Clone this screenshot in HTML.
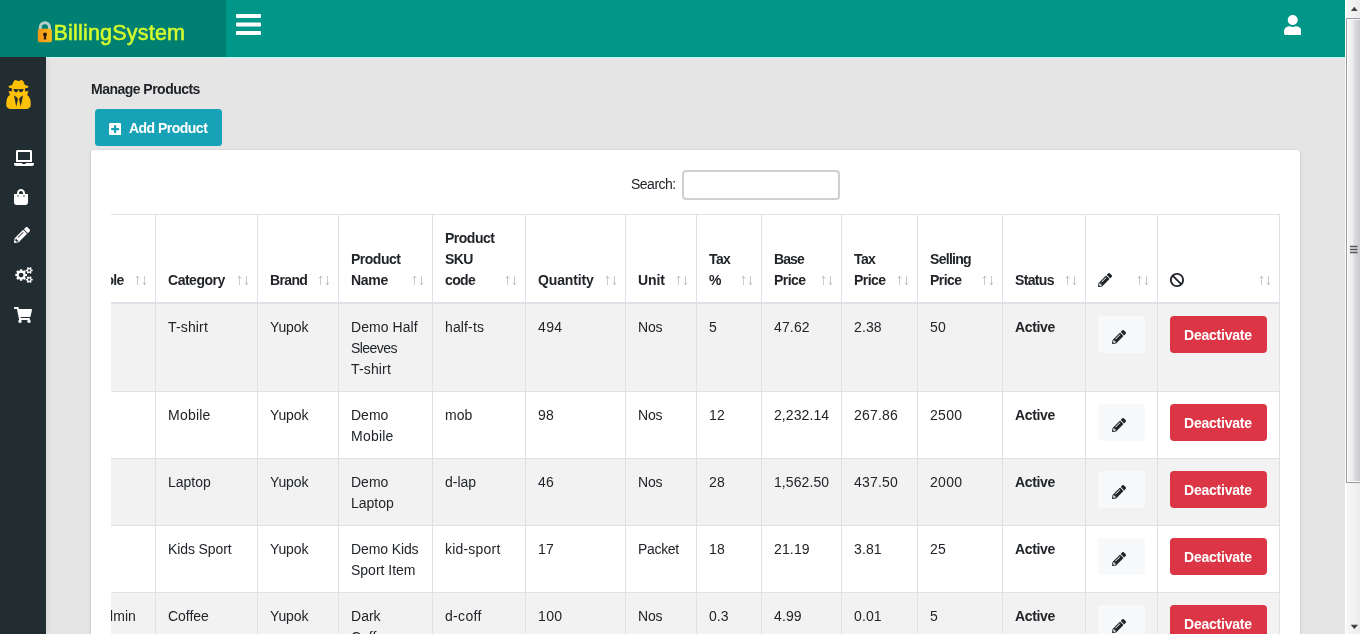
<!DOCTYPE html>
<html lang="en"><head><meta charset="utf-8"><title>Manage Products</title>
<style>
*{box-sizing:border-box}
html,body{margin:0;padding:0}
body{width:1360px;height:634px;overflow:hidden;background:#e5e5e5;font-family:"Liberation Sans", sans-serif;font-size:14px;line-height:21px;color:#212529;position:relative;will-change:transform}
.ic{display:block}
.abs{position:absolute}
#hdr{left:0;top:0;width:1345px;height:57px;background:#009688}
#logo{left:0;top:0;width:226px;height:57px;background:#008073}
#logotxt{left:53.500px;top:18px;height:30px;line-height:30px;font-size:21.500px;color:#d4fb2e;white-space:nowrap;-webkit-text-stroke:.5px #d4fb2e;letter-spacing:.2px}
#logotxt .t{top:0}
#hline{left:46px;top:57px;width:1299px;height:4px;background:linear-gradient(#c6f9f0 0,#c6f9f0 1px,#e2ecea 1px,#e2ecea 2px,#ebe3e5 2px,#ebe3e5 3px,#e8e4e5 3px)}
#side{left:0;top:57px;width:46px;height:577px;background:#222d32;box-shadow:1px 0 7px rgba(0,0,0,.07)}
#title{left:91px;top:77.500px;font-weight:700;white-space:nowrap}
#add{left:95px;top:109px;width:127px;height:37px;background:#17a2b8;border-radius:3.500px;color:#fff;font-weight:700;white-space:nowrap}
#add .t{position:absolute;left:34px;top:8.500px}
#card{left:91px;top:150px;width:1209px;height:500px;background:#fff;border-radius:3px;box-shadow:0 0 1px rgba(0,0,0,.125),0 1px 3px rgba(0,0,0,.2)}
#slabel{left:631px;top:173px;white-space:nowrap}
#sinput{left:682px;top:170px;width:158px;height:30px;border:2px solid #cfcfd3;border-radius:4px;background:#fff}
#twrap{left:111px;top:214px;width:1169px;height:420px;overflow:hidden}
table{border-collapse:separate;border-spacing:0;table-layout:fixed;width:1196px;margin-left:-27px;border-top:1px solid #dee2e6}
th,td{padding:12px 0 12px 12px;border-right:1px solid #dee2e6;text-align:left;vertical-align:top;white-space:nowrap;position:relative;overflow:hidden}
th{vertical-align:bottom;font-weight:700;border-bottom:2px solid #dee2e6;height:89px}
td{border-bottom:1px solid #dee2e6}
tbody tr:nth-child(odd) td{background:#f2f2f2}
.t{position:relative;top:1px}
.sa{position:absolute;right:6px;bottom:16px}
.hi{display:block;height:21px;padding-top:4px}
.be{display:block;width:47px;height:37px;background:#f8f9fa;border-radius:4px;padding:14px 0 0 14px;margin-top:0}
.bd{display:block;width:97px;height:37px;background:#dc3545;border-radius:4px;color:#fff;font-weight:700;padding:8px 0 0 14px}
#sb{left:1345px;top:0;width:15px;height:634px;background:linear-gradient(90deg,#fff 0,#fff 1px,#f7f7f7 2px,#ececec 100%)}
#thumb{left:1px;top:18px;width:14px;height:465px;border:1px solid #9c9ca0;border-right:0;box-shadow:inset 1px 1px 0 rgba(255,255,255,.85),inset 0 -1px 0 rgba(255,255,255,.85);background:linear-gradient(90deg,#f7f7f7 0,#ececee 42%,#dcdce0 58%,#c8c8cf 100%)}
</style></head><body>
<div id="hdr" class="abs"></div>
<div id="logo" class="abs"></div>
<svg class="abs" style="left:37px;top:21px" width="16" height="22" viewBox="0 0 16 22"><defs><linearGradient id="lg" x1="0" y1="0" x2="1" y2="0"><stop offset="0" stop-color="#f1941d"/><stop offset="1" stop-color="#fdb814"/></linearGradient></defs><path d="M3.300 9.500V6.400a4.600 4.600 0 0 1 9.200 0V9.500" fill="none" stroke="#b7d0c9" stroke-width="3"/><rect x="0.800" y="7.800" width="14.100" height="13.400" rx="1.800" fill="url(#lg)"/><circle cx="8" cy="13.400" r="2" fill="#2b1a0c"/><path d="M7.200 13.500h1.600l.5 5h-2.600z" fill="#2b1a0c"/></svg>
<div id="logotxt" class="abs"><span class="t">BillingSystem</span></div>
<svg class="abs" style="left:236px;top:14px" width="25" height="21" viewBox="0 0 25 21"><rect x="0" y="0" width="25" height="4" rx="1" fill="#fff"/><rect x="0" y="8.500" width="25" height="4" rx="1" fill="#fff"/><rect x="0" y="17" width="25" height="4" rx="1" fill="#fff"/></svg>
<svg class="ic" width="17.5" height="20" viewBox="0 0 448 512" style="position:absolute;left:1283.500px;top:14.500px"><path fill="#fff" d="M224 256c70.700 0 128-57.300 128-128S294.700 0 224 0 96 57.300 96 128s57.300 128 128 128zm89.600 32h-16.700c-22.200 10.200-46.900 16-72.900 16s-50.600-5.800-72.900-16h-16.700C60.200 288 0 348.200 0 422.400V464c0 26.500 21.500 48 48 48h352c26.500 0 48-21.500 48-48v-41.600c0-74.200-60.200-134.400-134.400-134.400z"/></svg>
<div id="hline" class="abs"></div>
<div id="side" class="abs"></div>
<svg class="ic" width="25" height="29" viewBox="0 -1536 1408 1664" style="position:absolute;left:6px;top:80px"><path fill="#ffc107" transform="scale(1,-1)" d="M576 0l96 448l-96 128l-128 64zM832 0l128 640l-128 -64l-96 -128zM992 1010q-2 4 -4 6q-10 8 -96 8q-70 0 -167 -19q-7 -2 -21 -2t-21 2q-97 19 -167 19q-86 0 -96 -8q-2 -2 -4 -6q2 -18 4 -27q2 -3 7.5 -6.5t7.5 -10.5q2 -4 7.5 -20.5t7 -20.5t7.5 -17t8.5 -17t9 -14 t12 -13.5t14 -9.5t17.5 -8t20.5 -4t24.5 -2q36 0 59 12.5t32.5 30t14.5 34.5t11.5 29.5t17.5 12.5h12q11 0 17.5 -12.5t11.5 -29.5t14.5 -34.5t32.5 -30t59 -12.5q13 0 24.5 2t20.5 4t17.5 8t14 9.5t12 13.5t9 14t8.5 17t7.5 17t7 20.5t7.5 20.5q2 7 7.5 10.5t7.5 6.5 q2 9 4 27zM1408 131q0 -121 -73 -190t-194 -69h-874q-121 0 -194 69t-73 190q0 61 4.5 118t19 125.5t37.5 123.5t63.5 103.5t93.5 74.5l-90 220h214q-22 64 -22 128q0 12 2 32q-194 40 -194 96q0 57 210 99q17 62 51.5 134t70.5 114q32 37 76 37q30 0 84 -31t84 -31t84 31 t84 31q44 0 76 -37q36 -42 70.5 -114t51.5 -134q210 -42 210 -99q0 -56 -194 -96q7 -81 -20 -160h214l-82 -225q63 -33 107.5 -96.5t65.5 -143.5t29 -151.5t8 -148.5z"/></svg>
<svg class="ic" width="20" height="16" viewBox="0 0 640 512" style="position:absolute;left:14px;top:149.500px"><path fill="#fff" d="M624 416H381.540c-.74 19.810-14.710 32-32.740 32H288c-18.690 0-33.020-17.470-32.770-32H16c-8.800 0-16 7.200-16 16v16c0 35.200 28.800 64 64 64h512c35.200 0 64-28.800 64-64v-16c0-8.800-7.200-16-16-16zM576 48c0-26.400-21.600-48-48-48H112C85.600 0 64 21.600 64 48v336h512V48zm-64 272H128V64h384v256z"/></svg>
<svg class="ic" width="14" height="16" viewBox="0 0 448 512" style="position:absolute;left:14px;top:188.500px"><path fill="#fff" d="M352 160v-32C352 57.420 294.579 0 224 0 153.420 0 96 57.420 96 128v32H0v272c0 44.183 35.817 80 80 80h288c44.183 0 80-35.817 80-80V160h-96zm-192-32c0-35.290 28.710-64 64-64s64 28.710 64 64v32H160v-32zm160 120c-13.255 0-24-10.745-24-24s10.745-24 24-24 24 10.745 24 24-10.745 24-24 24zm-192 0c-13.255 0-24-10.745-24-24s10.745-24 24-24 24 10.745 24 24-10.745 24-24 24z"/></svg>
<svg class="ic" width="16" height="16" viewBox="0 0 512 512" style="position:absolute;left:14px;top:227px"><path fill="#fff" d="M497.900 142.100l-46.100 46.100c-4.700 4.700-12.300 4.700-17 0l-111-111c-4.700-4.700-4.700-12.300 0-17l46.100-46.100c18.700-18.700 49.100-18.700 67.900 0l60.100 60.100c18.800 18.700 18.800 49.100 0 67.900zM284.200 99.800L21.600 362.400.4 483.900c-2.900 16.400 11.400 30.600 27.800 27.800l121.500-21.300 262.600-262.600c4.700-4.700 4.700-12.300 0-17l-111-111c-4.800-4.700-12.400-4.700-17.100 0zM124.100 339.900c-5.500-5.500-5.500-14.300 0-19.800l154-154c5.500-5.500 14.300-5.500 19.800 0s5.500 14.300 0 19.800l-154 154c-5.500 5.500-14.300 5.500-19.800 0zM88 424h48v36.300l-64.500 11.300-31.100-31.100L51.700 376H88v48z"/></svg>
<svg class="ic" width="20" height="16" viewBox="0 -1520 1920 1761" style="position:absolute;left:14px;top:266.500px"><path fill="#fff" transform="scale(1,-1)" d="M896 640q0 106 -75 181t-181 75t-181 -75t-75 -181t75 -181t181 -75t181 75t75 181zM1664 128q0 52 -38 90t-90 38t-90 -38t-38 -90q0 -53 37.5 -90.5t90.5 -37.5t90.5 37.5t37.5 90.5zM1664 1152q0 52 -38 90t-90 38t-90 -38t-38 -90q0 -53 37.5 -90.5t90.5 -37.5 t90.5 37.5t37.5 90.5zM1280 731v-185q0 -10 -7 -19.5t-16 -10.5l-155 -24q-11 -35 -32 -76q34 -48 90 -115q7 -11 7 -20q0 -12 -7 -19q-23 -30 -82.5 -89.5t-78.5 -59.5q-11 0 -21 7l-115 90q-37 -19 -77 -31q-11 -108 -23 -155q-7 -24 -30 -24h-186q-11 0 -20 7.5t-10 17.5 l-23 153q-34 10 -75 31l-118 -89q-7 -7 -20 -7q-11 0 -21 8q-144 133 -144 160q0 9 7 19q10 14 41 53t47 61q-23 44 -35 82l-152 24q-10 1 -17 9.5t-7 19.5v185q0 10 7 19.5t16 10.5l155 24q11 35 32 76q-34 48 -90 115q-7 11 -7 20q0 12 7 20q22 30 82 89t79 59q11 0 21 -7 l115 -90q34 18 77 32q11 108 23 154q7 24 30 24h186q11 0 20 -7.5t10 -17.5l23 -153q34 -10 75 -31l118 89q8 7 20 7q11 0 21 -8q144 -133 144 -160q0 -8 -7 -19q-12 -16 -42 -54t-45 -60q23 -48 34 -82l152 -23q10 -2 17 -10.5t7 -19.5zM1920 198v-140q0 -16 -149 -31 q-12 -27 -30 -52q51 -113 51 -138q0 -4 -4 -7q-122 -71 -124 -71q-8 0 -46 47t-52 68q-20 -2 -30 -2t-30 2q-14 -21 -52 -68t-46 -47q-2 0 -124 71q-4 3 -4 7q0 25 51 138q-18 25 -30 52q-149 15 -149 31v140q0 16 149 31q13 29 30 52q-51 113 -51 138q0 4 4 7q4 2 35 20 t59 34t30 16q8 0 46 -46.5t52 -67.5q20 2 30 2t30 -2q51 71 92 112l6 2q4 0 124 -70q4 -3 4 -7q0 -25 -51 -138q17 -23 30 -52q149 -15 149 -31zM1920 1222v-140q0 -16 -149 -31q-12 -27 -30 -52q51 -113 51 -138q0 -4 -4 -7q-122 -71 -124 -71q-8 0 -46 47t-52 68 q-20 -2 -30 -2t-30 2q-14 -21 -52 -68t-46 -47q-2 0 -124 71q-4 3 -4 7q0 25 51 138q-18 25 -30 52q-149 15 -149 31v140q0 16 149 31q13 29 30 52q-51 113 -51 138q0 4 4 7q4 2 35 20t59 34t30 16q8 0 46 -46.5t52 -67.5q20 2 30 2t30 -2q51 71 92 112l6 2q4 0 124 -70 q4 -3 4 -7q0 -25 -51 -138q17 -23 30 -52q149 -15 149 -31z"/></svg>
<svg class="ic" width="18" height="16" viewBox="0 0 576 512" style="position:absolute;left:14px;top:306.500px"><path fill="#fff" d="M528.120 301.319l47.273-208C578.806 78.301 567.391 64 551.990 64H159.208l-9.166-44.810C147.758 8.021 137.930 0 126.529 0H24C10.745 0 0 10.745 0 24v16c0 13.255 10.745 24 24 24h69.883l70.248 343.435C147.325 417.100 136 435.222 136 456c0 30.928 25.072 56 56 56s56-25.072 56-56c0-15.674-6.447-29.835-16.824-40h209.647C430.447 426.165 424 440.326 424 456c0 30.928 25.072 56 56 56s56-25.072 56-56c0-22.172-12.888-41.332-31.579-50.405l5.517-24.276c3.413-15.018-8.002-29.319-23.403-29.319H218.117l-6.545-32h293.145c11.206 0 20.920-7.754 23.403-18.681z"/></svg>
<div id="title" class="abs"><span class="t" style="letter-spacing:-0.522px">Manage Products</span></div>
<div id="add" class="abs"><svg class="ic" width="12.25" height="12.25" viewBox="0 32 448 448" style="position:absolute;left:14px;top:13.500px"><path fill="#fff" d="M400 32H48C21.500 32 0 53.500 0 80v352c0 26.500 21.500 48 48 48h352c26.500 0 48-21.500 48-48V80c0-26.500-21.500-48-48-48zm-32 252c0 6.600-5.400 12-12 12h-92v92c0 6.600-5.400 12-12 12h-56c-6.600 0-12-5.400-12-12v-92H92c-6.600 0-12-5.400-12-12v-56c0-6.600 5.400-12 12-12h92v-92c0-6.600 5.400-12 12-12h56c6.600 0 12 5.400 12 12v92h92c6.600 0 12 5.400 12 12v56z"/></svg><span class="t" style="letter-spacing:-0.520px">Add Product</span></div>
<div id="card" class="abs"></div>
<div id="slabel" class="abs"><span class="t" style="letter-spacing:-0.504px">Search:</span></div>
<div id="sinput" class="abs"></div>
<div id="twrap" class="abs"><table><colgroup><col style="width:72px"><col style="width:102px"><col style="width:81px"><col style="width:94px"><col style="width:93px"><col style="width:100px"><col style="width:71px"><col style="width:65px"><col style="width:80px"><col style="width:76px"><col style="width:85px"><col style="width:83px"><col style="width:72px"><col style="width:122px"></colgroup><thead><tr><th><span class="t" style="letter-spacing:-0.703px">Role</span><svg class="sa" width="16" height="11" viewBox="0 0 16 11"><path d="M4.500 10V1.300M2.700 3.400L4.500 1.300L6.300 3.400M11.500 1V9.700M9.700 7.600L11.500 9.700L13.300 7.600" fill="none" stroke="#212529" stroke-opacity=".24" stroke-width="1"/></svg></th><th><span class="t" style="letter-spacing:-0.484px">Category</span><svg class="sa" width="16" height="11" viewBox="0 0 16 11"><path d="M4.500 10V1.300M2.700 3.400L4.500 1.300L6.300 3.400M11.500 1V9.700M9.700 7.600L11.500 9.700L13.300 7.600" fill="none" stroke="#212529" stroke-opacity=".24" stroke-width="1"/></svg></th><th><span class="t" style="letter-spacing:-0.656px">Brand</span><svg class="sa" width="16" height="11" viewBox="0 0 16 11"><path d="M4.500 10V1.300M2.700 3.400L4.500 1.300L6.300 3.400M11.500 1V9.700M9.700 7.600L11.500 9.700L13.300 7.600" fill="none" stroke="#212529" stroke-opacity=".24" stroke-width="1"/></svg></th><th><span class="t" style="letter-spacing:-0.496px">Product</span><br><span class="t" style="letter-spacing:-0.305px">Name</span><svg class="sa" width="16" height="11" viewBox="0 0 16 11"><path d="M4.500 10V1.300M2.700 3.400L4.500 1.300L6.300 3.400M11.500 1V9.700M9.700 7.600L11.500 9.700L13.300 7.600" fill="none" stroke="#212529" stroke-opacity=".24" stroke-width="1"/></svg></th><th><span class="t" style="letter-spacing:-0.496px">Product</span><br><span class="t" style="letter-spacing:-0.630px">SKU</span><br><span class="t" style="letter-spacing:-0.648px">code</span><svg class="sa" width="16" height="11" viewBox="0 0 16 11"><path d="M4.500 10V1.300M2.700 3.400L4.500 1.300L6.300 3.400M11.500 1V9.700M9.700 7.600L11.500 9.700L13.300 7.600" fill="none" stroke="#212529" stroke-opacity=".24" stroke-width="1"/></svg></th><th><span class="t" style="letter-spacing:-0.145px">Quantity</span><svg class="sa" width="16" height="11" viewBox="0 0 16 11"><path d="M4.500 10V1.300M2.700 3.400L4.500 1.300L6.300 3.400M11.500 1V9.700M9.700 7.600L11.500 9.700L13.300 7.600" fill="none" stroke="#212529" stroke-opacity=".24" stroke-width="1"/></svg></th><th><span class="t" style="letter-spacing:-0.098px">Unit</span><svg class="sa" width="16" height="11" viewBox="0 0 16 11"><path d="M4.500 10V1.300M2.700 3.400L4.500 1.300L6.300 3.400M11.500 1V9.700M9.700 7.600L11.500 9.700L13.300 7.600" fill="none" stroke="#212529" stroke-opacity=".24" stroke-width="1"/></svg></th><th><span class="t" style="letter-spacing:-0.604px">Tax</span><br><span class="t" style="letter-spacing:-0.969px">%</span><svg class="sa" width="16" height="11" viewBox="0 0 16 11"><path d="M4.500 10V1.300M2.700 3.400L4.500 1.300L6.300 3.400M11.500 1V9.700M9.700 7.600L11.500 9.700L13.300 7.600" fill="none" stroke="#212529" stroke-opacity=".24" stroke-width="1"/></svg></th><th><span class="t" style="letter-spacing:-0.906px">Base</span><br><span class="t" style="letter-spacing:-0.562px">Price</span><svg class="sa" width="16" height="11" viewBox="0 0 16 11"><path d="M4.500 10V1.300M2.700 3.400L4.500 1.300L6.300 3.400M11.500 1V9.700M9.700 7.600L11.500 9.700L13.300 7.600" fill="none" stroke="#212529" stroke-opacity=".24" stroke-width="1"/></svg></th><th><span class="t" style="letter-spacing:-0.604px">Tax</span><br><span class="t" style="letter-spacing:-0.562px">Price</span><svg class="sa" width="16" height="11" viewBox="0 0 16 11"><path d="M4.500 10V1.300M2.700 3.400L4.500 1.300L6.300 3.400M11.500 1V9.700M9.700 7.600L11.500 9.700L13.300 7.600" fill="none" stroke="#212529" stroke-opacity=".24" stroke-width="1"/></svg></th><th><span class="t" style="letter-spacing:-0.710px">Selling</span><br><span class="t" style="letter-spacing:-0.562px">Price</span><svg class="sa" width="16" height="11" viewBox="0 0 16 11"><path d="M4.500 10V1.300M2.700 3.400L4.500 1.300L6.300 3.400M11.500 1V9.700M9.700 7.600L11.500 9.700L13.300 7.600" fill="none" stroke="#212529" stroke-opacity=".24" stroke-width="1"/></svg></th><th><span class="t" style="letter-spacing:-0.659px">Status</span><svg class="sa" width="16" height="11" viewBox="0 0 16 11"><path d="M4.500 10V1.300M2.700 3.400L4.500 1.300L6.300 3.400M11.500 1V9.700M9.700 7.600L11.500 9.700L13.300 7.600" fill="none" stroke="#212529" stroke-opacity=".24" stroke-width="1"/></svg></th><th><span class="hi"><svg class="ic" width="14" height="14" viewBox="0 0 512 512" style=""><path fill="#212529" d="M497.900 142.100l-46.100 46.100c-4.700 4.700-12.300 4.700-17 0l-111-111c-4.700-4.700-4.700-12.300 0-17l46.100-46.100c18.700-18.700 49.100-18.700 67.900 0l60.100 60.100c18.800 18.700 18.800 49.100 0 67.900zM284.200 99.800L21.600 362.400.4 483.900c-2.900 16.400 11.400 30.600 27.800 27.800l121.500-21.300 262.600-262.600c4.700-4.700 4.700-12.300 0-17l-111-111c-4.800-4.700-12.400-4.700-17.100 0zM124.100 339.900c-5.500-5.500-5.500-14.300 0-19.800l154-154c5.500-5.500 14.300-5.500 19.800 0s5.500 14.300 0 19.800l-154 154c-5.500 5.500-14.300 5.500-19.800 0zM88 424h48v36.300l-64.500 11.300-31.100-31.100L51.700 376H88v48z"/></svg></span><svg class="sa" width="16" height="11" viewBox="0 0 16 11"><path d="M4.500 10V1.300M2.700 3.400L4.500 1.300L6.300 3.400M11.500 1V9.700M9.700 7.600L11.500 9.700L13.300 7.600" fill="none" stroke="#212529" stroke-opacity=".24" stroke-width="1"/></svg></th><th><span class="hi"><svg class="ic" width="14" height="14" viewBox="8 8 496 496" style=""><path fill="#212529" d="M256 8C119.034 8 8 119.033 8 256s111.034 248 248 248 248-111.034 248-248S392.967 8 256 8zm130.108 117.892c65.448 65.448 70 165.481 20.677 235.637L150.470 105.216c70.204-49.356 170.226-44.735 235.638 20.676zM125.892 386.108c-65.448-65.448-70-165.481-20.677-235.637L361.530 406.784c-70.203 49.356-170.226 44.736-235.638-20.676z"/></svg></span><svg class="sa" width="16" height="11" viewBox="0 0 16 11"><path d="M4.500 10V1.300M2.700 3.400L4.500 1.300L6.300 3.400M11.500 1V9.700M9.700 7.600L11.500 9.700L13.300 7.600" fill="none" stroke="#212529" stroke-opacity=".24" stroke-width="1"/></svg></th></tr></thead><tbody><tr><td></td><td><span class="t" style="letter-spacing:0.154px">T-shirt</span></td><td><span class="t" style="letter-spacing:-0.134px">Yupok</span></td><td><span class="t" style="letter-spacing:0.056px">Demo Half</span><br><span class="t" style="letter-spacing:-0.558px">Sleeves</span><br><span class="t" style="letter-spacing:0.154px">T-shirt</span></td><td><span class="t" style="letter-spacing:0.134px">half-ts</span></td><td><span class="t" style="letter-spacing:0.339px">494</span></td><td><span class="t" style="letter-spacing:-0.141px">Nos</span></td><td><span class="t" style="letter-spacing:0.328px">5</span></td><td><span class="t" style="letter-spacing:0.150px">47.62</span></td><td><span class="t" style="letter-spacing:0.105px">2.38</span></td><td><span class="t" style="letter-spacing:0.336px">50</span></td><td><b><span class="t" style="letter-spacing:-0.349px">Active</span></b></td><td><span class="be"><svg class="ic" width="14" height="14" viewBox="0 0 512 512" style=""><path fill="#212529" d="M497.900 142.100l-46.100 46.100c-4.700 4.700-12.300 4.700-17 0l-111-111c-4.700-4.700-4.700-12.300 0-17l46.100-46.100c18.700-18.700 49.100-18.700 67.900 0l60.100 60.100c18.800 18.700 18.800 49.100 0 67.900zM284.200 99.800L21.600 362.400.4 483.900c-2.900 16.400 11.400 30.600 27.800 27.800l121.500-21.300 262.600-262.600c4.700-4.700 4.700-12.300 0-17l-111-111c-4.800-4.700-12.400-4.700-17.100 0zM124.100 339.900c-5.500-5.500-5.500-14.300 0-19.800l154-154c5.500-5.500 14.300-5.500 19.800 0s5.500 14.300 0 19.800l-154 154c-5.500 5.500-14.300 5.500-19.800 0zM88 424h48v36.300l-64.500 11.300-31.100-31.100L51.700 376H88v48z"/></svg></span></td><td><span class="bd"><span class="t" style="letter-spacing:-0.230px">Deactivate</span></span></td></tr><tr><td></td><td><span class="t" style="letter-spacing:0.229px">Mobile</span></td><td><span class="t" style="letter-spacing:-0.134px">Yupok</span></td><td><span class="t" style="letter-spacing:0.012px">Demo</span><br><span class="t" style="letter-spacing:0.229px">Mobile</span></td><td><span class="t" style="letter-spacing:0.021px">mob</span></td><td><span class="t" style="letter-spacing:0.336px">98</span></td><td><span class="t" style="letter-spacing:-0.141px">Nos</span></td><td><span class="t" style="letter-spacing:0.336px">12</span></td><td><span class="t" style="letter-spacing:0.088px">2,232.14</span></td><td><span class="t" style="letter-spacing:0.180px">267.86</span></td><td><span class="t" style="letter-spacing:0.332px">2500</span></td><td><b><span class="t" style="letter-spacing:-0.349px">Active</span></b></td><td><span class="be"><svg class="ic" width="14" height="14" viewBox="0 0 512 512" style=""><path fill="#212529" d="M497.900 142.100l-46.100 46.100c-4.700 4.700-12.300 4.700-17 0l-111-111c-4.700-4.700-4.700-12.300 0-17l46.100-46.100c18.700-18.700 49.100-18.700 67.900 0l60.100 60.100c18.800 18.700 18.800 49.100 0 67.900zM284.200 99.800L21.600 362.400.4 483.900c-2.900 16.400 11.400 30.600 27.800 27.800l121.500-21.300 262.600-262.600c4.700-4.700 4.700-12.300 0-17l-111-111c-4.800-4.700-12.400-4.700-17.100 0zM124.100 339.900c-5.500-5.500-5.500-14.300 0-19.800l154-154c5.500-5.500 14.300-5.500 19.800 0s5.500 14.300 0 19.800l-154 154c-5.500 5.500-14.300 5.500-19.800 0zM88 424h48v36.300l-64.500 11.300-31.100-31.100L51.700 376H88v48z"/></svg></span></td><td><span class="bd"><span class="t" style="letter-spacing:-0.230px">Deactivate</span></span></td></tr><tr><td></td><td><span class="t" style="letter-spacing:-0.026px">Laptop</span></td><td><span class="t" style="letter-spacing:-0.134px">Yupok</span></td><td><span class="t" style="letter-spacing:0.012px">Demo</span><br><span class="t" style="letter-spacing:-0.026px">Laptop</span></td><td><span class="t">d-lap</span></td><td><span class="t" style="letter-spacing:0.336px">46</span></td><td><span class="t" style="letter-spacing:-0.141px">Nos</span></td><td><span class="t" style="letter-spacing:0.336px">28</span></td><td><span class="t" style="letter-spacing:0.088px">1,562.50</span></td><td><span class="t" style="letter-spacing:0.180px">437.50</span></td><td><span class="t" style="letter-spacing:0.332px">2000</span></td><td><b><span class="t" style="letter-spacing:-0.349px">Active</span></b></td><td><span class="be"><svg class="ic" width="14" height="14" viewBox="0 0 512 512" style=""><path fill="#212529" d="M497.900 142.100l-46.100 46.100c-4.700 4.700-12.300 4.700-17 0l-111-111c-4.700-4.700-4.700-12.300 0-17l46.100-46.100c18.700-18.700 49.100-18.700 67.900 0l60.100 60.100c18.800 18.700 18.800 49.100 0 67.900zM284.200 99.800L21.600 362.400.4 483.900c-2.900 16.400 11.400 30.600 27.800 27.800l121.500-21.300 262.600-262.600c4.700-4.700 4.700-12.300 0-17l-111-111c-4.800-4.700-12.400-4.700-17.100 0zM124.100 339.900c-5.500-5.500-5.500-14.300 0-19.800l154-154c5.500-5.500 14.300-5.500 19.800 0s5.500 14.300 0 19.800l-154 154c-5.500 5.500-14.300 5.500-19.800 0zM88 424h48v36.300l-64.500 11.300-31.100-31.100L51.700 376H88v48z"/></svg></span></td><td><span class="bd"><span class="t" style="letter-spacing:-0.230px">Deactivate</span></span></td></tr><tr><td></td><td><span class="t" style="letter-spacing:-0.113px">Kids Sport</span></td><td><span class="t" style="letter-spacing:-0.134px">Yupok</span></td><td><span class="t" style="letter-spacing:-0.106px">Demo Kids</span><br><span class="t" style="letter-spacing:-0.005px">Sport Item</span></td><td><span class="t" style="letter-spacing:0.200px">kid-sport</span></td><td><span class="t" style="letter-spacing:0.336px">17</span></td><td><span class="t" style="letter-spacing:-0.318px">Packet</span></td><td><span class="t" style="letter-spacing:0.336px">18</span></td><td><span class="t" style="letter-spacing:0.150px">21.19</span></td><td><span class="t" style="letter-spacing:0.105px">3.81</span></td><td><span class="t" style="letter-spacing:0.336px">25</span></td><td><b><span class="t" style="letter-spacing:-0.349px">Active</span></b></td><td><span class="be"><svg class="ic" width="14" height="14" viewBox="0 0 512 512" style=""><path fill="#212529" d="M497.900 142.100l-46.100 46.100c-4.700 4.700-12.300 4.700-17 0l-111-111c-4.700-4.700-4.700-12.300 0-17l46.100-46.100c18.700-18.700 49.100-18.700 67.900 0l60.100 60.100c18.800 18.700 18.800 49.100 0 67.900zM284.200 99.800L21.600 362.400.4 483.900c-2.900 16.400 11.400 30.600 27.800 27.800l121.500-21.300 262.600-262.600c4.700-4.700 4.700-12.300 0-17l-111-111c-4.800-4.700-12.400-4.700-17.100 0zM124.100 339.900c-5.500-5.500-5.500-14.300 0-19.800l154-154c5.500-5.500 14.300-5.500 19.800 0s5.500 14.300 0 19.800l-154 154c-5.500 5.500-14.300 5.500-19.800 0zM88 424h48v36.300l-64.500 11.300-31.100-31.100L51.700 376H88v48z"/></svg></span></td><td><span class="bd"><span class="t" style="letter-spacing:-0.230px">Deactivate</span></span></td></tr><tr><td><span class="t" style="letter-spacing:0.034px">Admin</span></td><td><span class="t" style="letter-spacing:-0.021px">Coffee</span></td><td><span class="t" style="letter-spacing:-0.134px">Yupok</span></td><td><span class="t" style="letter-spacing:0.020px">Dark</span><br><span class="t" style="letter-spacing:-0.021px">Coffee</span></td><td><span class="t" style="letter-spacing:0.323px">d-coff</span></td><td><span class="t" style="letter-spacing:0.339px">100</span></td><td><span class="t" style="letter-spacing:-0.141px">Nos</span></td><td><span class="t" style="letter-spacing:0.026px">0.3</span></td><td><span class="t" style="letter-spacing:0.105px">4.99</span></td><td><span class="t" style="letter-spacing:0.105px">0.01</span></td><td><span class="t" style="letter-spacing:0.328px">5</span></td><td><b><span class="t" style="letter-spacing:-0.349px">Active</span></b></td><td><span class="be"><svg class="ic" width="14" height="14" viewBox="0 0 512 512" style=""><path fill="#212529" d="M497.900 142.100l-46.100 46.100c-4.700 4.700-12.300 4.700-17 0l-111-111c-4.700-4.700-4.700-12.300 0-17l46.100-46.100c18.700-18.700 49.100-18.700 67.900 0l60.100 60.100c18.800 18.700 18.800 49.100 0 67.900zM284.200 99.800L21.600 362.400.4 483.900c-2.900 16.400 11.400 30.600 27.800 27.800l121.500-21.300 262.600-262.600c4.700-4.700 4.700-12.300 0-17l-111-111c-4.800-4.700-12.400-4.700-17.100 0zM124.100 339.900c-5.500-5.500-5.500-14.300 0-19.800l154-154c5.500-5.500 14.300-5.500 19.800 0s5.500 14.300 0 19.800l-154 154c-5.500 5.500-14.300 5.500-19.800 0zM88 424h48v36.300l-64.500 11.300-31.100-31.100L51.700 376H88v48z"/></svg></span></td><td><span class="bd"><span class="t" style="letter-spacing:-0.230px">Deactivate</span></span></td></tr></tbody></table></div>
<div id="sb" class="abs"><div id="thumb" class="abs"></div>
<svg class="abs" style="left:0;top:0" width="15" height="634" viewBox="0 0 15 634"><path d="M5.900 11L9.300 6.700L12.700 11Z" fill="#454545"/><path d="M5.700 624.800L9.400 629L13.100 624.800Z" fill="#404040"/><path d="M5 246.500h7.500M5 249.500h7.500M5 252.500h7.500" stroke="#55555a" stroke-width="1.400"/></svg>
</div>
</body></html>
